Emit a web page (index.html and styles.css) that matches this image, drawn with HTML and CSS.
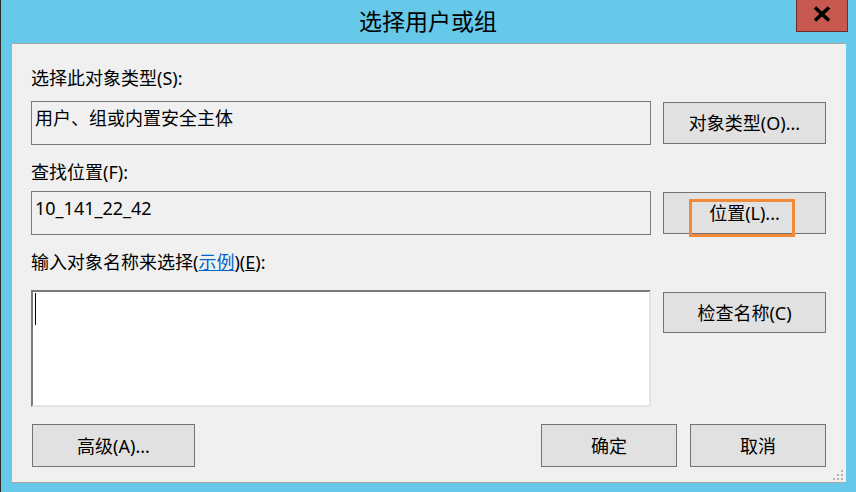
FILE: index.html
```html
<!DOCTYPE html>
<html lang="zh-CN">
<head>
<meta charset="utf-8">
<title>选择用户或组</title>
<link rel="stylesheet" href="styles.css">
</head>
<body>
<div class="window">
  <div class="titlebar">
    <div class="title">选择用户或组</div>
    <div class="close">
      <svg width="18" height="16" viewBox="0 0 18 16"><path d="M2 1.5 L16 14.5 M16 1.5 L2 14.5" stroke="#000" stroke-width="3.6" fill="none"/></svg>
    </div>
  </div>
  <div class="client">
    <div class="label l1">选择此对象类型(S):</div>
    <div class="row r1">
      <div class="field">用户、组或内置安全主体</div>
      <div class="btn side">对象类型(O)...</div>
    </div>
    <div class="label l2">查找位置(F):</div>
    <div class="row r2">
      <div class="field">10_141_22_42</div>
      <div class="btn side focused">位置(L)...<span class="focus-ring"></span></div>
    </div>
    <div class="label l3">输入对象名称来选择(<span class="link">示例</span>)(<u>E</u>):</div>
    <div class="row r3">
      <div class="input"><span class="caret"></span></div>
      <div class="btn side check">检查名称(C)</div>
    </div>
    <div class="bottom">
      <div class="btn adv">高级(A)...</div>
      <div class="spacer"></div>
      <div class="btn ok">确定</div>
      <div class="btn cancel">取消</div>
    </div>
    <svg class="grip" width="12" height="12" viewBox="0 0 12 12">
      <rect x="9" y="1" width="2" height="2" fill="#b4b4b4"/>
      <rect x="5" y="5" width="2" height="2" fill="#b4b4b4"/>
      <rect x="9" y="5" width="2" height="2" fill="#b4b4b4"/>
      <rect x="1" y="9" width="2" height="2" fill="#b4b4b4"/>
      <rect x="5" y="9" width="2" height="2" fill="#b4b4b4"/>
      <rect x="9" y="9" width="2" height="2" fill="#b4b4b4"/>
    </svg>
  </div>
</div>
</body>
</html>
```
FILE: styles.css
```css
* { box-sizing: border-box; }
html, body { margin: 0; padding: 0; }
body {
  font-family: "Noto Sans", "Noto Sans CJK SC", sans-serif;
  color: #000;
}
.window {
  width: 856px;
  height: 492px;
  background: #66c9e9;
  border-left: 1px solid #2a2a2a;
  position: relative;
  overflow: hidden;
}
.titlebar {
  height: 43px;
  display: flex;
  justify-content: center;
  align-items: center;
  position: relative;
}
.title {
  font-size: 23px;
  line-height: 30px;
  margin-left: -1px;
  margin-top: -1px;
}
.close {
  position: absolute;
  top: 0;
  left: 795px;
  width: 52px;
  height: 32px;
  background: #c6584f;
  border: 1px solid #6e2b27;
  border-top: none;
  display: flex;
  align-items: center;
  justify-content: center;
  padding-bottom: 3px;
}
.client {
  margin-left: 11px;
  width: 834px;
  height: 440px;
  background: #f0f0f0;
  border-top: 1px solid #a6a6a6;
  border-bottom: 1px solid #a6a6a6;
  padding: 22px 20px 0 19px;
  position: relative;
  font-size: 18px;
}
.label {
  height: 24px;
  line-height: 24px;
  white-space: nowrap;
}
.l2, .l3 { margin-top: 15px; }
.link { color: #0066cc; text-decoration: underline; }
.row {
  display: flex;
  gap: 12px;
  align-items: center;
}
.r1 { margin-top: 11px; }
.r2 { margin-top: 7px; }
.r3 { margin-top: 16px; align-items: flex-start; }
.field {
  width: 620px;
  height: 44px;
  border: 1px solid #7a7a7a;
  padding: 4px 3px 0;
  line-height: 24px;
  white-space: nowrap;
}
.btn {
  background: #e1e1e1;
  border: 1px solid #737373;
  display: flex;
  align-items: center;
  justify-content: center;
  line-height: 24px;
  white-space: nowrap;
  position: relative;
}
.side { width: 163px; height: 42px; }
.check { margin-top: 2px; height: 41px; }
.focus-ring {
  position: absolute;
  left: 25px;
  top: 6px;
  width: 106px;
  height: 38px;
  border: 3px solid #f28a3a;
}
.input {
  width: 620px;
  height: 117px;
  background: #fff;
  border-top: 2px solid #7a7a7a;
  border-left: 2px solid #7a7a7a;
  border-right: 2px solid #e3e3e3;
  border-bottom: 2px solid #e3e3e3;
  padding: 1px 2px;
}
.caret {
  display: block;
  width: 1px;
  height: 32px;
  background: #000;
}
.bottom {
  margin-top: 17px;
  display: flex;
  gap: 13px;
  padding-left: 1px;
}
.bottom .btn { height: 43px; }
.adv { width: 163px; }
.spacer { flex: 1; }
.ok, .cancel { width: 136px; }
.grip {
  position: absolute;
  right: 2px;
  bottom: 1px;
}
```
